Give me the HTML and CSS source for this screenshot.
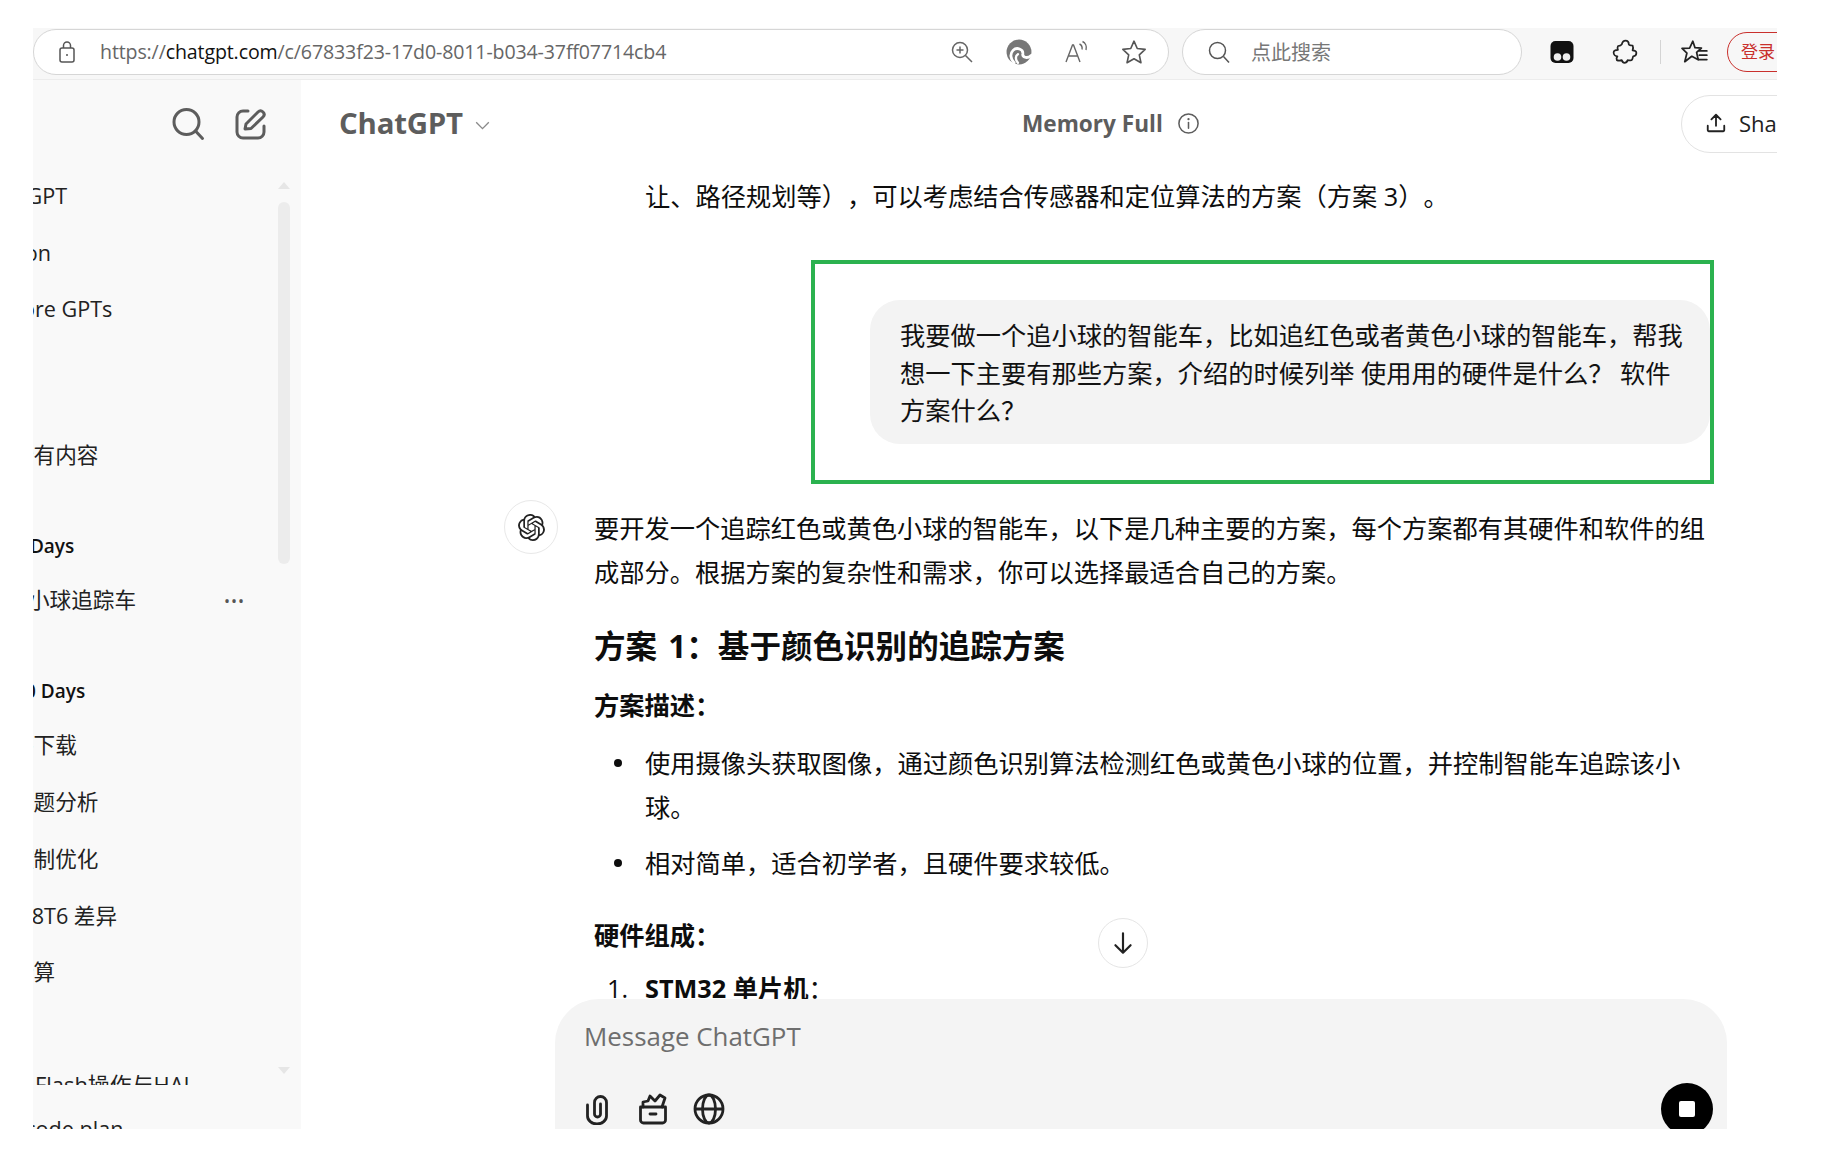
FILE: index.html
```html
<!DOCTYPE html>
<html lang="zh-CN">
<head>
<meta charset="utf-8">
<title>ChatGPT</title>
<link rel="stylesheet" href="styles.css">
</head>
<body>
<div class="frame">
  <div class="toolbar">
    <div class="addr">
      <svg class="ic-lock" viewBox="0 0 20 24" fill="none" stroke="#555" stroke-width="1.5"><rect x="3" y="8" width="14" height="14" rx="2"/><path d="M6.5 8V5.5a3.5 3.5 0 0 1 7 0V8"/><circle cx="10" cy="15" r="1" fill="#555" stroke="none"/></svg>
      <div class="url"><span>https://</span><b>chatgpt.com</b><span>/c/67833f23-17d0-8011-b034-37ff07714cb4</span></div>
      <svg class="ic-zoom" viewBox="0 0 24 24" fill="none" stroke="#666" stroke-width="1.5"><circle cx="10" cy="10" r="7.5"/><path d="M15.5 15.5L22 22M10 6.5v7M6.5 10h7"/></svg>
      <svg class="ic-swirl" viewBox="0 0 24 24"><circle cx="12" cy="12" r="11.500" fill="#777"/><path fill="none" stroke="#fff" stroke-width="2.600" stroke-linecap="round" d="M23.500 15C19 19 15 16.500 15.500 13.500 16 9.500 10 7 6.500 10.500 3.500 13.500 4 18.500 7.500 22"/><path fill="none" stroke="#fff" stroke-width="2.200" stroke-linecap="round" d="M11 22c-2.500-3-2.500-6.500 0-8"/></svg>
      <svg class="ic-read" viewBox="0 0 26 24" fill="none" stroke="#666" stroke-width="1.4"><path d="M2 22L8.500 5h1L16 22M4.500 16h9"/><path d="M15.500 4c2 1 3 3 2.500 5.500M18.500 1.500c3 1.500 4.500 5 3.500 8.500"/></svg>
      <svg class="ic-star" viewBox="0 0 24 24" fill="none" stroke="#555" stroke-width="1.5" stroke-linejoin="round"><path d="M12 2l3 6.800 7.300.8-5.400 5 1.500 7.300L12 18.200 5.600 21.900l1.500-7.300-5.400-5 7.300-.8z"/></svg>
    </div>
    <div class="searchbox">
      <svg class="ic-find" viewBox="0 0 24 24" fill="none" stroke="#555" stroke-width="1.5"><circle cx="10.500" cy="10.500" r="8"/><path d="M16.500 16.500L22 22.500"/></svg>
      <span class="find-text">点此搜索</span>
    </div>
    <div class="ext">
      <svg class="ic-tamper" viewBox="0 0 24 24"><rect x="0.500" y="1" width="23" height="22" rx="5" fill="#111"/><circle cx="7.500" cy="17" r="3.800" fill="#eee"/><circle cx="16.500" cy="17" r="3.800" fill="#eee"/></svg>
      <svg class="ic-puzzle" viewBox="0 0 24 24" fill="none" stroke="#222" stroke-width="1.6" stroke-linejoin="round"><path d="M5.500 6.500C7 6.500 8.500 6 9 5c.5-2 1.500-3.500 3.500-3.500S15.500 3 15.500 5c.5 1 2 1 3.500 1 .5 1 .5 3 0 4.500 2 0 3.500 .5 3.500 2.500s-1.500 3-3 3c-.3 1.500-.5 3-1.500 3.500-1.500 .3-2.500 .2-3.500 0-.5 1.500-1.500 2.500-3 2.500S9.500 21 9 19.500c-1.500 .5-3.500 .5-4.500 0-.5-1.500 0-3 .5-3.500-2 0-3.500-1.500-3.500-3.500S3.500 10 5.500 10c-.5-1-.5-2.500 0-3.500z"/></svg>
      <div class="divider"></div>
      <svg class="ic-fav" viewBox="0 0 26 24" fill="none" stroke="#222" stroke-width="1.6" stroke-linejoin="round"><path d="M11 2l2 6 6 .3-4.500 4 1.500 7L10 16 3.500 21l2-8L1 8.700l7-.4z"/><path d="M17 11h7M17 15h7M17 19h7" stroke-linecap="round"/></svg>
      <div class="login">登录</div>
    </div>
  </div>

  <div class="body">
    <aside class="side">
      <div class="side-head">
        <svg class="ic-s" viewBox="0 0 34 34" fill="none" stroke="#5d5d5d" stroke-width="3"><circle cx="15.500" cy="15" r="12.500"/><path d="M24.500 24l7 7.500" stroke-linecap="round"/></svg>
        <svg class="ic-e" viewBox="0 0 34 34" fill="none" stroke="#5d5d5d" stroke-width="3" stroke-linecap="round" stroke-linejoin="round"><path d="M14 4H9a6 6 0 0 0-6 6v15a6 6 0 0 0 6 6h15a6 6 0 0 0 6-6v-6"/><path d="M11 22l1-5L24 5c1.500-1.500 3.500-1.500 5 0s1.500 3.500 0 5L17 21.500z"/></svg>
      </div>
      <div class="side-list">
        <div class="item latin">ChatGPT</div>
        <div class="item latin">Python</div>
        <div class="item latin">Explore GPTs</div>
        <div class="item cjk gap-a">所有内容</div>
        <div class="sec">Previous 7 Days</div>
        <div class="item cjk-one">小球追踪车<span class="dots">•••</span></div>
        <div class="sec">Previous 30 Days</div>
        <div class="item cjk">件下载</div>
        <div class="item cjk">问题分析</div>
        <div class="item cjk">控制优化</div>
        <div class="item t6">STM32F103C8T6 差异</div>
        <div class="item cjk">计算</div>
        <div class="item flash">Flash操作与HAL</div>
        <div class="item code">Encode plan</div>
      </div>
      <div class="bar-track"></div>
      <div class="bar-up"></div>
      <div class="bar-down"></div>
    </aside>

    <main class="main">
      <header class="head">
        <div class="brand">ChatGPT
          <svg class="ic-chev" viewBox="0 0 16 10" fill="none" stroke="#8a8a8a" stroke-width="1.500"><path d="M1 1.500L8 8.500l7-7"/></svg>
        </div>
        <div class="mem">Memory Full
          <svg class="ic-info" viewBox="0 0 24 24" fill="none" stroke="#5d5d5d" stroke-width="1.600"><circle cx="12" cy="12" r="10"/><path d="M12 11v6" stroke-linecap="round"/><circle cx="12" cy="7.500" r="1.200" fill="#5d5d5d" stroke="none"/></svg>
        </div>
        <div class="share">
          <svg class="ic-up" viewBox="0 0 24 24" fill="none" stroke="#222" stroke-width="2" stroke-linecap="round" stroke-linejoin="round"><path d="M12 15V3M7 8l5-5 5 5M3 15v5a1 1 0 0 0 1 1h16a1 1 0 0 0 1-1v-5"/></svg>
          <span>Share</span>
        </div>
      </header>

      <div class="thread">
        <p class="tail">让、路径规划等），可以考虑结合传感器和定位算法的方案（方案 3）。</p>
        <section class="mark">
          <div class="bubble">我要做一个追小球的智能车，比如追红色或者黄色小球的智能车，帮我想一下主要有那些方案，介绍的时候列举 使用用的硬件是什么？ 软件方案什么？</div>
        </section>
        <section class="reply">
          <div class="avatar">
            <svg viewBox="0 0 24 24"><path fill="#222" d="M22.2819 9.8211a5.9847 5.9847 0 0 0-.5157-4.9108 6.0462 6.0462 0 0 0-6.5098-2.9A6.0651 6.0651 0 0 0 4.9807 4.1818a5.9847 5.9847 0 0 0-3.9977 2.9 6.0462 6.0462 0 0 0 .7427 7.0966 5.9847 5.9847 0 0 0 .511 4.9107 6.051 6.051 0 0 0 6.5146 2.9001A5.9847 5.9847 0 0 0 13.2599 24a6.0557 6.0557 0 0 0 5.7718-4.2058 5.9894 5.9894 0 0 0 3.9977-2.9001 6.0557 6.0557 0 0 0-.7475-7.0729zm-9.022 12.6081a4.4755 4.4755 0 0 1-2.8764-1.0408l.1419-.0804 4.7783-2.7582a.7948.7948 0 0 0 .3927-.6813v-6.7369l2.02 1.1686a.071.071 0 0 1 .038.052v5.5826a4.504 4.504 0 0 1-4.4945 4.4944zm-9.6607-4.1254a4.4708 4.4708 0 0 1-.5346-3.0137l.142.0852 4.783 2.7582a.7712.7712 0 0 0 .7806 0l5.8428-3.3685v2.3324a.0804.0804 0 0 1-.0332.0615L9.74 19.9502a4.4992 4.4992 0 0 1-6.1408-1.6464zM2.3408 7.8956a4.485 4.485 0 0 1 2.3655-1.9728V11.6a.7664.7664 0 0 0 .3879.6765l5.8144 3.3543-2.0201 1.1685a.0757.0757 0 0 1-.071 0l-4.8303-2.7865A4.504 4.504 0 0 1 2.3408 7.872zm16.5963 3.8558L13.1038 8.364 15.1192 7.2a.0757.0757 0 0 1 .071 0l4.8303 2.7913a4.4944 4.4944 0 0 1-.6765 8.1042v-5.6772a.79.79 0 0 0-.407-.667zm2.0107-3.0231l-.142-.0852-4.7735-2.7818a.7759.7759 0 0 0-.7854 0L9.409 9.2297V6.8974a.0662.0662 0 0 1 .0284-.0615l4.8303-2.7866a4.4992 4.4992 0 0 1 6.6802 4.66zM8.3065 12.863l-2.02-1.1638a.0804.0804 0 0 1-.038-.0567V6.0742a4.4992 4.4992 0 0 1 7.3757-3.4537l-.142.0805L8.704 5.459a.7948.7948 0 0 0-.3927.6813zm1.0976-2.3654l2.602-1.4998 2.6069 1.4998v2.9994l-2.5974 1.4997-2.6067-1.4997Z"/></svg>
          </div>
          <div class="answer">
            <p class="lead">要开发一个追踪红色或黄色小球的智能车，以下是几种主要的方案，每个方案都有其硬件和软件的组成部分。根据方案的复杂性和需求，你可以选择最适合自己的方案。</p>
            <h3>方案 1：基于颜色识别的追踪方案</h3>
            <p class="label">方案描述：</p>
            <ul>
              <li>使用摄像头获取图像，通过颜色识别算法检测红色或黄色小球的位置，并控制智能车追踪该小球。</li>
              <li>相对简单，适合初学者，且硬件要求较低。</li>
            </ul>
            <p class="label label-hw">硬件组成：</p>
            <ol>
              <li><b>STM32 单片机</b>：</li>
            </ol>
          </div>
        </section>
        <div class="to-bottom">
          <svg viewBox="0 0 24 24" fill="none" stroke="#222" stroke-width="2" stroke-linecap="round" stroke-linejoin="round"><path d="M12 3v18M5 14l7 7 7-7"/></svg>
        </div>
      </div>

      <div class="composer">
        <div class="placeholder">Message ChatGPT</div>
        <div class="tools">
          <svg class="tool" viewBox="0 0 32 32" fill="none" stroke="#222" stroke-width="2.800" stroke-linecap="round"><path d="M6.500 12v11a9.500 8 0 0 0 19 0V9.500a6 6 0 0 0-12 0V21a3 3 0 0 0 6 0V11"/></svg>
          <svg class="tool" viewBox="0 0 32 32" fill="none" stroke="#222" stroke-width="2.800" stroke-linecap="round" stroke-linejoin="round"><path d="M3.500 14h25v13a3 3 0 0 1-3 3h-19a3 3 0 0 1-3-3z"/><path d="M6 14V9l5-1 2-5 5 5 5-6 5 3-3 9"/><path d="M13 21h6"/></svg>
          <svg class="tool" viewBox="0 0 32 32" fill="none" stroke="#222" stroke-width="2.800"><circle cx="16" cy="16" r="14"/><ellipse cx="16" cy="16" rx="6.500" ry="14"/><path d="M2 16h28"/></svg>
          <div class="stop"><span class="stop-sq"></span></div>
        </div>
      </div>
    </main>
  </div>
</div>
</body>
</html>
```

FILE: styles.css
```css
* { box-sizing: border-box; }
html, body { margin: 0; height: 100%; background: #fff; }
body {
  padding: 28px 61px 22px 33px;
  height: 1151px;
  overflow: hidden;
  font-family: "Open Sans", "Noto Sans CJK SC", sans-serif;
  color: #0d0d0d;
  text-spacing-trim: space-all;
}
.frame { height: 100%; display: flex; flex-direction: column; overflow: hidden; }

/* browser toolbar */
.toolbar {
  height: 52px;
  flex: none;
  display: flex;
  align-items: flex-start;
  background: #f7f7f7;
  border-bottom: 1px solid #ececec;
}
.addr {
  margin-top: 1px;
  width: 1136px;
  height: 46px;
  flex: none;
  display: flex;
  align-items: center;
  background: #fff;
  border: 1.5px solid #d6d6d6;
  border-radius: 23px;
  padding-left: 23px;
}
.ic-lock { width: 20px; height: 24px; flex: none; }
.url { margin: -2px 0 0 23px; width: 850px; font-size: 19.6px; color: #666; white-space: nowrap; flex: none; letter-spacing: -0.14px; }
.url b { font-weight: 400; color: #111; }
.ic-zoom { width: 24px; height: 24px; flex: none; }
.ic-swirl { width: 26px; height: 26px; margin-left: 32px; flex: none; }
.ic-read { width: 26px; height: 24px; margin-left: 32px; flex: none; }
.ic-star { width: 26px; height: 26px; margin-left: 31px; flex: none; }
.searchbox {
  margin: 1px 0 0 13px;
  width: 340px;
  height: 46px;
  flex: none;
  display: flex;
  align-items: center;
  background: #fff;
  border: 1.5px solid #d6d6d6;
  border-radius: 23px;
  padding-left: 24px;
}
.ic-find { width: 24px; height: 24px; flex: none; }
.find-text { margin: -2px 0 0 20px; font-size: 20px; color: #777; }
.ext { height: 46px; margin-top: 1px; display: flex; align-items: center; flex: 1; min-width: 0; overflow: hidden; padding-left: 28px; }
.ic-tamper { width: 24px; height: 24px; flex: none; }
.ic-puzzle { width: 26px; height: 26px; margin-left: 38px; flex: none; }
.divider { width: 1px; height: 24px; background: #d4d4d4; margin-left: 22px; flex: none; }
.ic-fav { width: 28px; height: 26px; margin-left: 20px; flex: none; }
.login {
  margin-left: 18px;
  height: 40px;
  width: 80px;
  flex: none;
  border: 1.5px solid #c9302c;
  border-radius: 20px;
  color: #c9302c;
  font-size: 17px;
  line-height: 37px;
  padding-left: 13px;
}

/* below toolbar */
.body { flex: 1; min-height: 0; display: flex; }

/* sidebar */
.side {
  width: 268px;
  flex: none;
  background: #f9f9f9;
  position: relative;
  overflow: hidden;
  display: flex;
  flex-direction: column;
}
.side-head { height: 88px; flex: none; display: flex; align-items: center; justify-content: flex-end; gap: 29px; padding-right: 33px; }
.ic-s { width: 34px; height: 34px; }
.ic-e { width: 34px; height: 34px; }
.side-list { flex: 1; min-height: 0; display: flex; flex-direction: column; font-size: 21.6px; color: #222; white-space: nowrap; overflow: hidden; }
.item { height: 56.700px; flex: none; line-height: 56.700px; position: relative; }
.latin { margin-left: -53px; }
.cjk { margin-left: -21px; }
.gap-a { margin-top: 89px; }
.cjk-one { margin-left: -5px; }
.t6 { margin-left: -131px; }
.sec { font-size: 19px; font-weight: 600; height: 34px; line-height: 34px; margin: 45.500px 0 9px -103px; flex: none; color: #111; }
.dots { position: absolute; left: 196px; top: 1px; font-size: 16px; color: #555; letter-spacing: 1px; }
.flash { margin-top: 56px; height: 28px; overflow: hidden; margin-left: 2px; font-size: 21.9px; }
.code { margin-left: -33px; margin-top: 16px; }
.bar-track { position: absolute; left: 245px; top: 122px; width: 12px; height: 362px; background: #ececec; border-radius: 6px; }
.bar-up { position: absolute; left: 245px; top: 102px; border: 6px solid transparent; border-top: 0; border-bottom: 7px solid #e6e6e6; }
.bar-down { position: absolute; left: 245px; top: 987px; border: 6px solid transparent; border-bottom: 0; border-top: 7px solid #e6e6e6; }

/* main */
.main { flex: 1; min-width: 0; display: flex; flex-direction: column; position: relative; overflow: hidden; }
.head { height: 88px; flex: none; display: flex; align-items: center; position: relative; padding: 0 0 3px 38px; }
.brand { font-size: 29.4px; font-weight: 700; color: #5d5d5d; display: flex; align-items: center; gap: 12px; letter-spacing: -0.2px; }
.ic-chev { width: 15px; height: 9px; margin-top: 5px; }
.mem { position: absolute; left: 721px; top: 1px; height: 85px; display: flex; align-items: center; gap: 15px; font-size: 22.600px; font-weight: 700; color: #5d5d5d; }
.ic-info { width: 23px; height: 23px; margin-left: -1px; }
.share {
  position: absolute;
  left: 1380px;
  top: 15px;
  width: 160px;
  height: 58px;
  border: 1.5px solid #e3e3e3;
  border-radius: 29px;
  display: flex;
  align-items: center;
  gap: 12px;
  padding: 0 0 2px 23px;
  font-size: 22px;
  color: #222;
}
.ic-up { width: 22px; height: 22px; }

.thread { flex: 1; min-height: 0; overflow: hidden; position: relative; font-size: 25.25px; line-height: 44.2px; color: #0d0d0d; }
.thread p { margin: 0; }
.tail { margin-left: 344px !important; padding-top: 6px; white-space: nowrap; }
.mark { margin: 42px 0 0 510px; width: 903px; height: 224px; border: 4px solid #2bb24f; padding: 36px 0 0 55px; }
.bubble {
  width: 840px;
  height: 144px;
  background: #f3f3f3;
  border-radius: 30px;
  padding: 17px 20px 0 30px;
  line-height: 37.500px;
  color: #111;
}
.reply { display: flex; margin-top: 22px; padding-left: 203px; }
.avatar { width: 54px; height: 54px; flex: none; margin-top: -6px; border: 1.5px solid #e8e8e8; border-radius: 50%; display: flex; align-items: center; justify-content: center; }
.avatar svg { width: 27px; height: 27px; }
.answer { margin-left: 36px; width: 1120px; }
h3 { margin: 29px 0 0; font-size: 31.560px; line-height: 44.2px; font-weight: 700; color: #0d0d0d; word-spacing: 3px; }
.label { margin-top: 15px !important; font-weight: 700; }
.label-hw { margin-top: 27px !important; }
ul { margin: 14px 0 0; padding: 0 0 0 51px; list-style: none; width: 1110px; }
ul li { position: relative; margin-bottom: 12px; }
ul li::before { content: ""; position: absolute; left: -31px; top: 18px; width: 8px; height: 8px; border-radius: 50%; background: #0d0d0d; }
ol { margin: 9px 0 0; padding: 0 0 0 51px; list-style: none; }
ol li { position: relative; }
ol li::before { content: "1."; position: absolute; left: -38px; font-weight: 400; }
ol b { font-weight: 700; }
.to-bottom { position: absolute; left: 797px; top: 750px; width: 50px; height: 50px; background: #fff; border: 1.5px solid #e5e5e5; border-radius: 50%; display: flex; align-items: center; justify-content: center; }
.to-bottom svg { width: 26px; height: 26px; }

/* composer */
.composer {
  flex: none;
  height: 130px;
  margin-left: 254px;
  width: 1172px;
  background: #f4f4f4;
  border-radius: 44px 44px 0 0;
  padding: 15px 25px 0 29px;
  overflow: hidden;
}
.placeholder { font-size: 25.9px; line-height: 44px; color: #6e6e6e; }
.tools { display: flex; align-items: center; gap: 24px; margin: 35px 0 0 -3px; position: relative; }
.tool { width: 32px; height: 32px; flex: none; }
.stop { position: absolute; left: 1080px; top: -10px; width: 52px; height: 52px; border-radius: 50%; background: #000; display: flex; align-items: center; justify-content: center; }
.stop-sq { width: 16px; height: 16px; background: #fff; border-radius: 2px; }
```
